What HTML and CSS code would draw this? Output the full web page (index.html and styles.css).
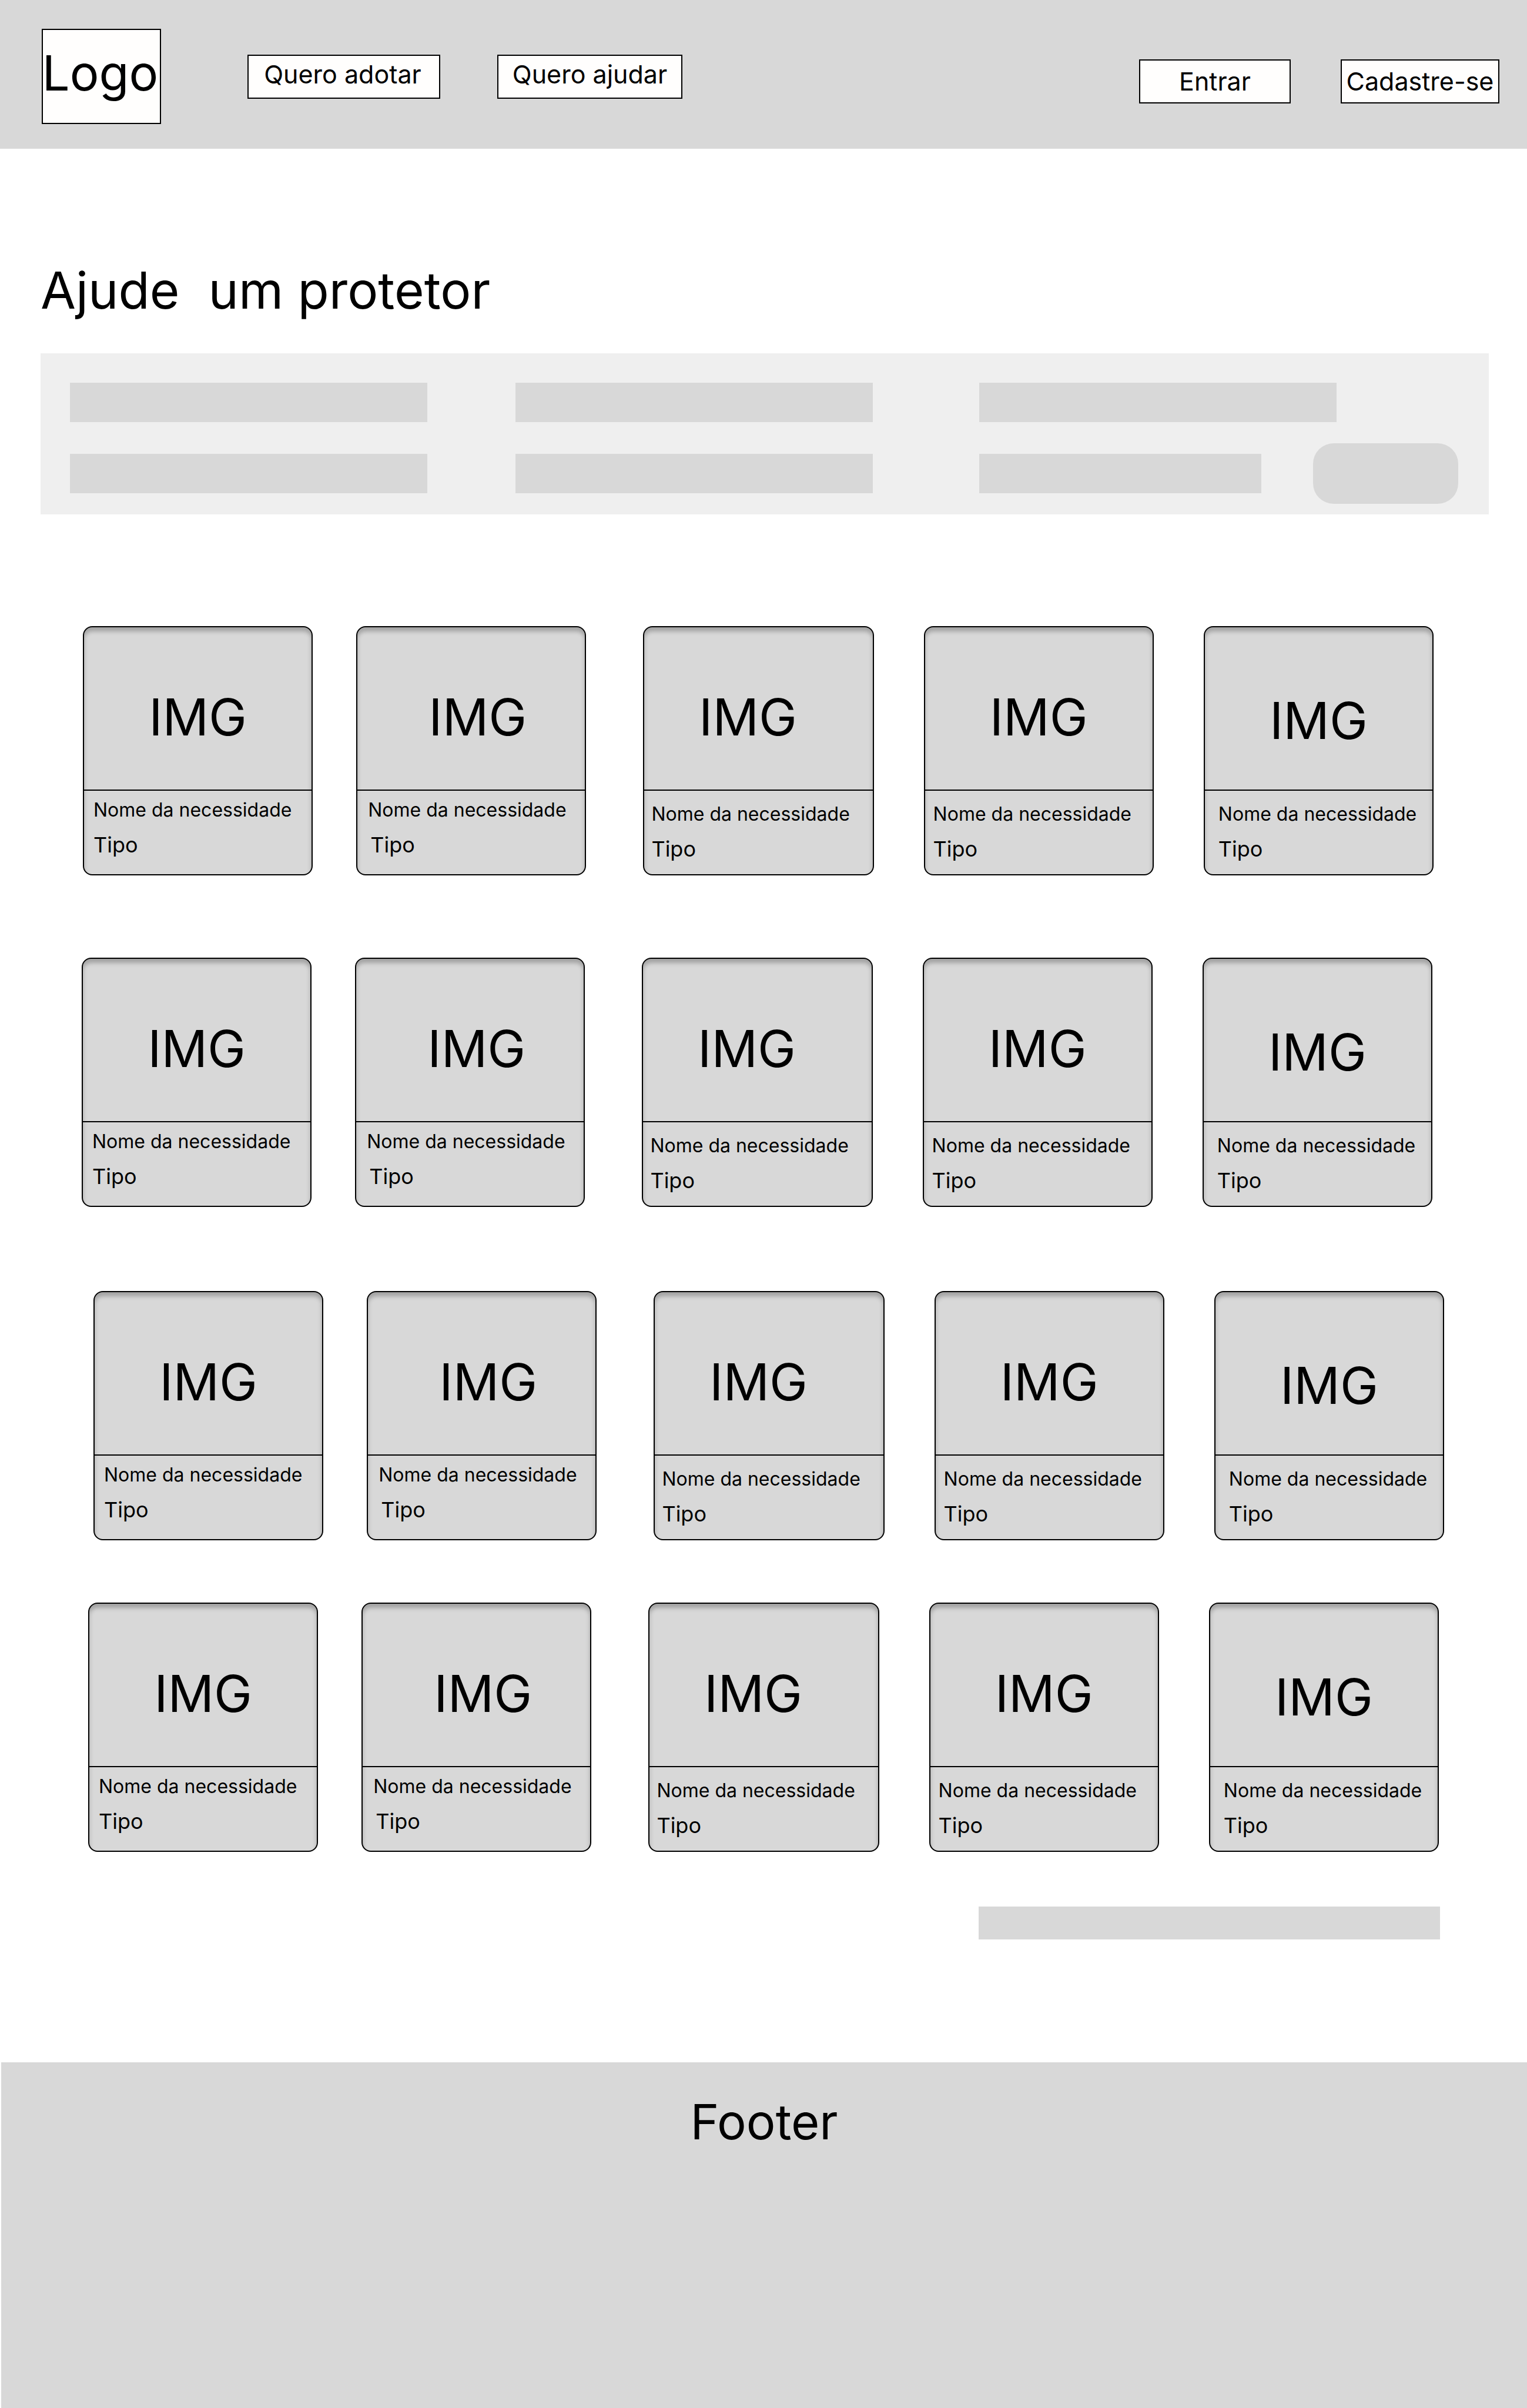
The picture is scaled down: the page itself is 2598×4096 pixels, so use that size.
FILE: index.html
```html
<!DOCTYPE html>
<html lang="pt-BR">
<head>
<meta charset="utf-8">
<meta name="viewport" content="width=device-width, initial-scale=1">
<title>Ajude um protetor</title>
<link rel="stylesheet" href="styles.css">
</head>
<body>
<header class="topbar">
  <a class="logo" href="#">Logo</a>
  <nav class="menu" aria-label="Principal">
    <a class="box-link box-link-adopt" href="#">Quero adotar</a>
    <a class="box-link box-link-help" href="#">Quero ajudar</a>
  </nav>
  <div class="account">
    <button class="box-link box-link-login" type="button">Entrar</button>
    <button class="box-link box-link-signup" type="button">Cadastre-se</button>
  </div>
</header>

<main class="content">
  <h1 class="title">Ajude  um protetor</h1>

  <form class="filters">
    <input class="field field-a" type="text" aria-label="Filtro 1">
    <input class="field field-b" type="text" aria-label="Filtro 2">
    <input class="field field-c" type="text" aria-label="Filtro 3">
    <input class="field field-a" type="text" aria-label="Filtro 4">
    <input class="field field-b" type="text" aria-label="Filtro 5">
    <input class="field field-short" type="text" aria-label="Filtro 6">
    <button class="search" type="button" aria-label="Buscar"></button>
  </form>

  <ul class="cards cards-1">
    <li class="card"><div class="media">IMG</div><div class="info"><h2 class="name">Nome da necessidade</h2><p class="kind">Tipo</p></div></li>
    <li class="card"><div class="media">IMG</div><div class="info"><h2 class="name">Nome da necessidade</h2><p class="kind">Tipo</p></div></li>
    <li class="card"><div class="media">IMG</div><div class="info"><h2 class="name">Nome da necessidade</h2><p class="kind">Tipo</p></div></li>
    <li class="card"><div class="media">IMG</div><div class="info"><h2 class="name">Nome da necessidade</h2><p class="kind">Tipo</p></div></li>
    <li class="card"><div class="media">IMG</div><div class="info"><h2 class="name">Nome da necessidade</h2><p class="kind">Tipo</p></div></li>
  </ul>
  <ul class="cards cards-2">
    <li class="card"><div class="media">IMG</div><div class="info"><h2 class="name">Nome da necessidade</h2><p class="kind">Tipo</p></div></li>
    <li class="card"><div class="media">IMG</div><div class="info"><h2 class="name">Nome da necessidade</h2><p class="kind">Tipo</p></div></li>
    <li class="card"><div class="media">IMG</div><div class="info"><h2 class="name">Nome da necessidade</h2><p class="kind">Tipo</p></div></li>
    <li class="card"><div class="media">IMG</div><div class="info"><h2 class="name">Nome da necessidade</h2><p class="kind">Tipo</p></div></li>
    <li class="card"><div class="media">IMG</div><div class="info"><h2 class="name">Nome da necessidade</h2><p class="kind">Tipo</p></div></li>
  </ul>
  <ul class="cards cards-3">
    <li class="card"><div class="media">IMG</div><div class="info"><h2 class="name">Nome da necessidade</h2><p class="kind">Tipo</p></div></li>
    <li class="card"><div class="media">IMG</div><div class="info"><h2 class="name">Nome da necessidade</h2><p class="kind">Tipo</p></div></li>
    <li class="card"><div class="media">IMG</div><div class="info"><h2 class="name">Nome da necessidade</h2><p class="kind">Tipo</p></div></li>
    <li class="card"><div class="media">IMG</div><div class="info"><h2 class="name">Nome da necessidade</h2><p class="kind">Tipo</p></div></li>
    <li class="card"><div class="media">IMG</div><div class="info"><h2 class="name">Nome da necessidade</h2><p class="kind">Tipo</p></div></li>
  </ul>
  <ul class="cards cards-4">
    <li class="card"><div class="media">IMG</div><div class="info"><h2 class="name">Nome da necessidade</h2><p class="kind">Tipo</p></div></li>
    <li class="card"><div class="media">IMG</div><div class="info"><h2 class="name">Nome da necessidade</h2><p class="kind">Tipo</p></div></li>
    <li class="card"><div class="media">IMG</div><div class="info"><h2 class="name">Nome da necessidade</h2><p class="kind">Tipo</p></div></li>
    <li class="card"><div class="media">IMG</div><div class="info"><h2 class="name">Nome da necessidade</h2><p class="kind">Tipo</p></div></li>
    <li class="card"><div class="media">IMG</div><div class="info"><h2 class="name">Nome da necessidade</h2><p class="kind">Tipo</p></div></li>
  </ul>

  <div class="pager"></div>
</main>

<footer class="footer">Footer</footer>
</body>
</html>
```
FILE: styles.css
```css
:root {
  --gray: #d8d8d8;
  --panel: #efefef;
  --paper: #fffefd;
}

* {
  box-sizing: border-box;
}

body {
  margin: 0;
  min-height: 100vh;
  display: flex;
  flex-direction: column;
  background: #fff;
  color: #000;
  font-family: Inter, "Liberation Sans", sans-serif;
  font-optical-sizing: none;
}

/* Top bar */
.topbar {
  display: flex;
  align-items: center;
  padding: 49px 47px 42px 71px;
  background: var(--gray);
}

.logo,
.box-link {
  display: flex;
  align-items: center;
  justify-content: center;
  border: 2px solid #000;
  background: var(--paper);
  color: inherit;
  text-decoration: none;
  white-space: nowrap;
}

.logo {
  width: 203px;
  height: 162px;
  padding: 0 4px 12px 0;
  font-size: 83px;
}

.menu,
.account {
  display: flex;
  align-items: center;
}

.menu {
  gap: 97px;
  margin-left: 147px;
}

.account {
  gap: 85px;
  margin-left: auto;
  padding-top: 16px;
}

.box-link {
  height: 75px;
  padding: 0;
  font-family: inherit;
  font-size: 43px;
}

.box-link-adopt,
.box-link-help {
  padding-bottom: 8px;
}

.box-link-adopt {
  width: 328px;
  padding-right: 4px;
}

.box-link-help {
  width: 315px;
}

.box-link-login {
  width: 258px;
}

.box-link-signup {
  width: 270px;
}

/* Title and filters */
.content {
  padding: 189px 65px 209px 69px;
}

.title {
  margin: 0 0 55px;
  font-size: 87px;
  font-weight: 400;
  line-height: 104px;
  white-space: pre;
}

.filters {
  display: grid;
  grid-template-columns: 608fr 150fr 608fr 181fr 480fr 88fr 40fr 207fr;
  row-gap: 36px;
  align-items: center;
  padding: 50px 52px 18px 50px;
  background: var(--panel);
}

.field {
  width: 100%;
  min-width: 0;
  height: 67px;
  padding: 0 16px;
  border: 0;
  background: var(--gray);
  font-family: inherit;
  font-size: 32px;
}

.field-a {
  grid-column: 1;
}

.field-b {
  grid-column: 3;
}

.field-c {
  grid-column: 5 / 8;
}

.field-short {
  grid-column: 5;
}

.search {
  grid-column: 7 / 9;
  height: 103px;
  border: 0;
  border-radius: 35px;
  background: var(--gray);
}

/* Card rows */
.cards {
  display: grid;
  grid-template-columns: 391fr 74fr 391fr 97fr 392fr 85fr 391fr 85fr 391fr;
  margin: 0;
  padding: 0;
  list-style: none;
}

.cards-1 {
  margin: 190px 94px 0 72px;
}

.cards-2 {
  margin: 140px 96px 0 70px;
}

.cards-3 {
  margin: 143px 76px 0 90px;
}

.cards-4 {
  margin: 106px 85px 0 81px;
}

.card {
  --media-padding: 29px 0 0;
  --info-top: 11px;
  --name-left: 16px;
  --kind-left: 16px;
  min-height: 424px;
  border: 2px solid #000;
  border-radius: 16px;
  background: var(--gray);
  box-shadow: inset 0 7px 7px rgba(0, 0, 0, 0.25);
}

.card:nth-child(1) {
  grid-column: 1;
}

.card:nth-child(2) {
  grid-column: 3;
  --media-padding: 29px 0 0 22px;
  --name-left: 18px;
  --kind-left: 22px;
}

.card:nth-child(3) {
  grid-column: 5;
  --media-padding: 29px 36px 0 0;
  --info-top: 18px;
  --name-left: 12px;
  --kind-left: 12px;
}

.card:nth-child(4) {
  grid-column: 7;
  --info-top: 18px;
  --name-left: 14px;
  --kind-left: 14px;
}

.card:nth-child(5) {
  grid-column: 9;
  --media-padding: 40px 0 0;
  --info-top: 18px;
  --name-left: 23px;
  --kind-left: 23px;
}

.media {
  display: flex;
  align-items: center;
  justify-content: center;
  height: 278px;
  padding: var(--media-padding);
  border-bottom: 2px solid #000;
  font-size: 87px;
}

.info {
  display: grid;
  gap: 15px;
  padding-top: var(--info-top);
}

.name,
.kind {
  margin: 0;
  font-weight: 400;
  line-height: 44px;
  white-space: nowrap;
}

.name {
  padding-left: var(--name-left);
  font-size: 32px;
}

.kind {
  padding-left: var(--kind-left);
  font-size: 36px;
}

.pager {
  max-width: 785px;
  height: 56px;
  margin: 93px 83px 0 auto;
  background: var(--gray);
}

/* Footer */
.footer {
  flex: 1;
  margin-left: 2px;
  padding: 51px 0;
  background: var(--gray);
  font-size: 83px;
  line-height: 100px;
  text-align: center;
}
```
